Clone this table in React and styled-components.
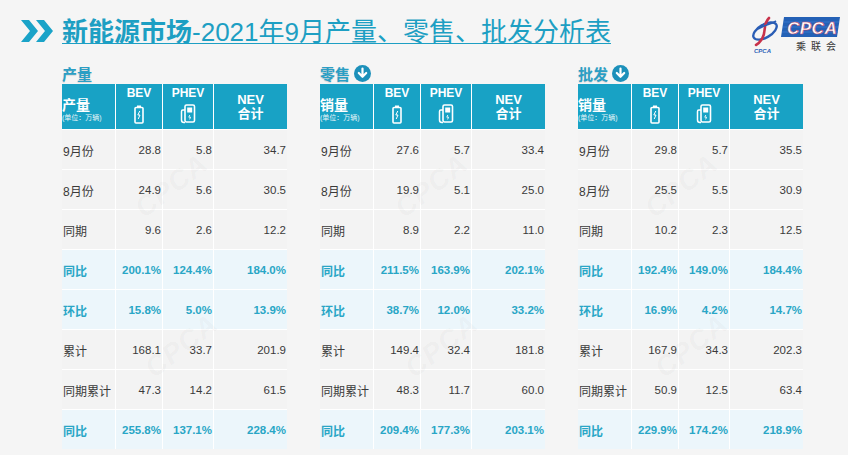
import React from 'react';
import styled, { createGlobalStyle } from 'styled-components';

const TEAL = '#18a2c5';

const GlobalStyle = createGlobalStyle`
  html, body {
    margin: 0;
    padding: 0;
    background: #f5f5f5;
  }
  body {
    font-family: "Liberation Sans", "Noto Sans CJK SC", sans-serif;
  }
`;

const Page = styled.div`
  position: relative;
  width: 848px;
  height: 455px;
  overflow: hidden;
  background: #f5f5f5;
`;

const Header = styled.header`
  display: flex;
  align-items: center;
  height: 62px;
  padding: 0 8px 0 21px;
`;

const Title = styled.h1`
  margin: 2px 0 0 9px;
  font-size: 26px;
  font-weight: normal;
  line-height: 30px;
  color: #1d9fc3;
  text-decoration: underline;
  text-decoration-thickness: 1px;
  text-underline-offset: 2px;
  white-space: nowrap;

  b {
    font-weight: bold;
  }
`;

const LogoBox = styled.div`
  margin-left: auto;
  margin-top: 8px;
  display: flex;
`;

const Panels = styled.div`
  display: flex;
  gap: 33px;
  padding-left: 62px;
`;

const Panel = styled.section`
  display: flex;
  flex-direction: column;
`;

const SectionTitle = styled.div`
  display: flex;
  align-items: center;
  gap: 4px;
  height: 22px;
  font-size: 15px;
  font-weight: bold;
  color: #2b9ec4;
  text-shadow: 0 1px 1px rgba(0, 0, 0, 0.12);
`;

const Grid = styled.div`
  display: grid;
  grid-template-columns: 53px 46px 50px 73px;
  grid-auto-rows: 39px;
  grid-template-rows: 45px;
  gap: 1px;
  background: #ffffff;
`;

const HeadCell = styled.div`
  background: ${TEAL};
  color: #fff;
  display: flex;
  flex-direction: column;
  align-items: ${({ $left }) => ($left ? 'flex-start' : 'center')};
  justify-content: ${({ $top }) => ($top ? 'flex-start' : 'center')};
  padding-top: ${({ $top }) => ($top ? '3px' : '0')};
  font-weight: bold;
  font-size: 12px;
  line-height: 13px;
`;

const HeadLabel = styled.span`
  font-size: 14px;
  line-height: 16px;
  margin-top: 6px;
`;

const Unit = styled.span`
  font-size: 7px;
  font-weight: normal;
  line-height: 10px;
  opacity: 0.9;
  white-space: nowrap;
`;

const NevLabel = styled.span`
  font-size: 13px;
  line-height: 14px;
  text-align: center;
`;

const Cell = styled.div`
  background: ${({ $hl }) => ($hl ? '#ecf6fb' : '#f3f3f3')};
  display: flex;
  align-items: center;
  justify-content: ${({ $label }) => ($label ? 'flex-start' : 'flex-end')};
  padding: ${({ $label }) => ($label ? '2px 0 0 1px' : '0 1px 0 0')};
  font-size: ${({ $label }) => ($label ? '12px' : '11.5px')};
  font-weight: ${({ $hl }) => ($hl ? 'bold' : 'normal')};
  color: ${({ $hl }) => ($hl ? '#29a6c6' : '#3a3a3a')};
  white-space: nowrap;
`;

const Watermark = styled.div`
  position: absolute;
  left: ${({ $x }) => $x}px;
  top: ${({ $y }) => $y}px;
  transform: rotate(-38deg);
  font: italic bold 28px "Liberation Sans", sans-serif;
  color: rgba(110, 110, 110, 0.045);
  pointer-events: none;
  letter-spacing: 1px;
`;

const Chevrons = () => (
  <svg width="32" height="22" viewBox="0 0 32 22">
    <polygon points="0,0 8,0 17,11 8,22 0,22 9,11" fill="#1aa3c8" />
    <polygon points="15,0 23,0 32,11 23,22 15,22 24,11" fill="#1aa3c8" />
  </svg>
);

const DownIcon = () => (
  <svg width="17" height="17" viewBox="0 0 17 17">
    <circle cx="8.5" cy="8.5" r="8.5" fill="#1c90ba" />
    <path d="M8.5 3.5v8M4.8 8l3.7 3.8L12.2 8" stroke="#fff" strokeWidth="2.2" fill="none" strokeLinecap="round" strokeLinejoin="round" />
  </svg>
);

const BatteryIcon = () => (
  <svg width="10" height="19" viewBox="0 0 10 19" style={{ marginTop: 5 }}>
    <rect x="3" y="0.5" width="4" height="2" fill="#fff" />
    <rect x="1" y="2.5" width="8" height="15.5" rx="1" stroke="#fff" strokeWidth="1.6" fill="none" />
    <path d="M5.8 6 L3.8 10 L6 10 L4.2 14" stroke="#fff" strokeWidth="1" fill="none" />
  </svg>
);

const ChargerIcon = () => (
  <svg width="16" height="20" viewBox="0 0 16 20" style={{ marginTop: 4 }}>
    <rect x="5" y="1" width="9.5" height="17" rx="1.5" stroke="#fff" strokeWidth="1.6" fill="none" />
    <rect x="7.2" y="3.5" width="5" height="5" fill="#fff" />
    <path d="M9.8 11 L8.8 13.2 L10.6 13.2 L9.6 15.4" stroke="#fff" strokeWidth="0.9" fill="none" />
    <path d="M5 6 H2.8 Q1.5 6 1.5 7.5 V16 Q1.5 18.5 4 18.5 H5" stroke="#fff" strokeWidth="1.5" fill="none" />
  </svg>
);

const Logo = () => (
  <svg width="90" height="40" viewBox="0 0 90 40">
    <ellipse cx="15" cy="16" rx="13" ry="6.5" transform="rotate(-30 15 16)" stroke="#2a5db5" strokeWidth="2.4" fill="none" />
    <path d="M19 3 C12 10 17 16 12 24 C10 27 8 29 6 30" stroke="#c8324a" strokeWidth="2.6" fill="none" strokeLinecap="round" />
    <path d="M8 14 C14 10 22 9 26 6" stroke="#2a5db5" strokeWidth="1.6" fill="none" />
    <text x="4" y="38" fontSize="6" fontStyle="italic" fontWeight="bold" fill="#2a5db5" fontFamily="Liberation Sans, sans-serif">CPCA</text>
    <polygon points="34,2 90,2 87,22 31,22" fill="#2461b6" />
    <path d="M34 7 H89 M33 12 H88 M32 17 H88" stroke="#3d7bd0" strokeWidth="0.8" />
    <text x="37" y="19" fontSize="17" fontStyle="italic" fontWeight="bold" fill="#fff" stroke="#c4405a" strokeWidth="0.5" fontFamily="Liberation Sans, sans-serif" letterSpacing="0.5">CPCA</text>
    <text x="46" y="35" fontSize="10" fill="#333" fontFamily="Noto Sans CJK SC, sans-serif" letterSpacing="5">乘联会</text>
  </svg>
);

const panels = [
  {
    title: '产量',
    head: '产量',
    icon: false,
    rows: [
      ['28.8', '5.8', '34.7'],
      ['24.9', '5.6', '30.5'],
      ['9.6', '2.6', '12.2'],
      ['200.1%', '124.4%', '184.0%'],
      ['15.8%', '5.0%', '13.9%'],
      ['168.1', '33.7', '201.9'],
      ['47.3', '14.2', '61.5'],
      ['255.8%', '137.1%', '228.4%'],
    ],
  },
  {
    title: '零售',
    head: '销量',
    icon: true,
    rows: [
      ['27.6', '5.7', '33.4'],
      ['19.9', '5.1', '25.0'],
      ['8.9', '2.2', '11.0'],
      ['211.5%', '163.9%', '202.1%'],
      ['38.7%', '12.0%', '33.2%'],
      ['149.4', '32.4', '181.8'],
      ['48.3', '11.7', '60.0'],
      ['209.4%', '177.3%', '203.1%'],
    ],
  },
  {
    title: '批发',
    head: '销量',
    icon: true,
    rows: [
      ['29.8', '5.7', '35.5'],
      ['25.5', '5.5', '30.9'],
      ['10.2', '2.3', '12.5'],
      ['192.4%', '149.0%', '184.4%'],
      ['16.9%', '4.2%', '14.7%'],
      ['167.9', '34.3', '202.3'],
      ['50.9', '12.5', '63.4'],
      ['229.9%', '174.2%', '218.9%'],
    ],
  },
];

const rowLabels = ['9月份', '8月份', '同期', '同比', '环比', '累计', '同期累计', '同比'];
const highlighted = [false, false, false, true, true, false, false, true];

const marks = [
  [130, 170], [390, 170], [640, 170],
  [140, 330], [400, 330], [650, 330],
];

const DataPanel = ({ title, head, icon, rows }) => (
  <Panel>
    <SectionTitle>
      {title}
      {icon && <DownIcon />}
    </SectionTitle>
    <Grid>
      <HeadCell $left>
        <HeadLabel>{head}</HeadLabel>
        <Unit>(单位：万辆)</Unit>
      </HeadCell>
      <HeadCell $top>
        BEV
        <BatteryIcon />
      </HeadCell>
      <HeadCell $top>
        PHEV
        <ChargerIcon />
      </HeadCell>
      <HeadCell>
        <NevLabel>
          NEV
          <br />
          合计
        </NevLabel>
      </HeadCell>
      {rows.map((row, i) => (
        <React.Fragment key={i}>
          <Cell $label $hl={highlighted[i]}>{rowLabels[i]}</Cell>
          {row.map((v, j) => (
            <Cell key={j} $hl={highlighted[i]}>{v}</Cell>
          ))}
        </React.Fragment>
      ))}
    </Grid>
  </Panel>
);

const App = () => (
  <>
    <GlobalStyle />
    <Page>
      <Header>
        <Chevrons />
        <Title>
          <b>新能源市场</b>-2021年9月产量、零售、批发分析表
        </Title>
        <LogoBox>
          <Logo />
        </LogoBox>
      </Header>
      <Panels>
        {panels.map((p) => (
          <DataPanel key={p.title} {...p} />
        ))}
      </Panels>
      {marks.map(([x, y], i) => (
        <Watermark key={i} $x={x} $y={y}>CPCA</Watermark>
      ))}
    </Page>
  </>
);

export default App;
